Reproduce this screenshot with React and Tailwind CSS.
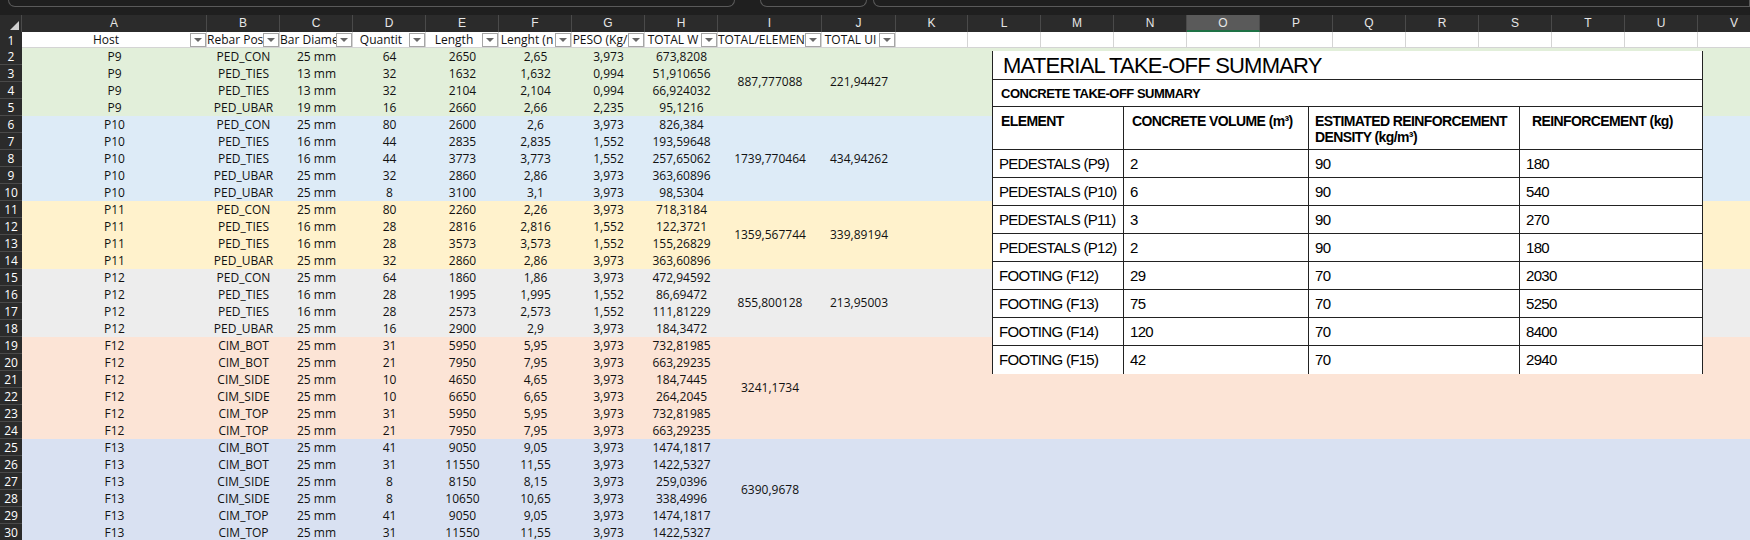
import React from "react";

const COLS = [
  ["A", 185], ["B", 73], ["C", 73], ["D", 73], ["E", 73], ["F", 73], ["G", 73], ["H", 73],
  ["I", 104], ["J", 74], ["K", 72], ["L", 73], ["M", 73], ["N", 73], ["O", 73], ["P", 73],
  ["Q", 73], ["R", 73], ["S", 73], ["T", 73], ["U", 73], ["V", 73],
];

const HEADS = ["Host", "Rebar Posi", "Bar Diame", "Quantit", "Length", "Lenght (n", "PESO (Kg/", "TOTAL W", "TOTAL/ELEMENT", "TOTAL UI"];

const groups = [
  {
    bg: "bg-[#e2efda]", i: "887,777088", j: "221,94427",
    rows: [
      ["P9", "PED_CON", "25 mm", "64", "2650", "2,65", "3,973", "673,8208"],
      ["P9", "PED_TIES", "13 mm", "32", "1632", "1,632", "0,994", "51,910656"],
      ["P9", "PED_TIES", "13 mm", "32", "2104", "2,104", "0,994", "66,924032"],
      ["P9", "PED_UBAR", "19 mm", "16", "2660", "2,66", "2,235", "95,1216"],
    ],
  },
  {
    bg: "bg-[#ddebf7]", i: "1739,770464", j: "434,94262",
    rows: [
      ["P10", "PED_CON", "25 mm", "80", "2600", "2,6", "3,973", "826,384"],
      ["P10", "PED_TIES", "16 mm", "44", "2835", "2,835", "1,552", "193,59648"],
      ["P10", "PED_TIES", "16 mm", "44", "3773", "3,773", "1,552", "257,65062"],
      ["P10", "PED_UBAR", "25 mm", "32", "2860", "2,86", "3,973", "363,60896"],
      ["P10", "PED_UBAR", "25 mm", "8", "3100", "3,1", "3,973", "98,5304"],
    ],
  },
  {
    bg: "bg-[#fff2cc]", i: "1359,567744", j: "339,89194",
    rows: [
      ["P11", "PED_CON", "25 mm", "80", "2260", "2,26", "3,973", "718,3184"],
      ["P11", "PED_TIES", "16 mm", "28", "2816", "2,816", "1,552", "122,3721"],
      ["P11", "PED_TIES", "16 mm", "28", "3573", "3,573", "1,552", "155,26829"],
      ["P11", "PED_UBAR", "25 mm", "32", "2860", "2,86", "3,973", "363,60896"],
    ],
  },
  {
    bg: "bg-[#ededed]", i: "855,800128", j: "213,95003",
    rows: [
      ["P12", "PED_CON", "25 mm", "64", "1860", "1,86", "3,973", "472,94592"],
      ["P12", "PED_TIES", "16 mm", "28", "1995", "1,995", "1,552", "86,69472"],
      ["P12", "PED_TIES", "16 mm", "28", "2573", "2,573", "1,552", "111,81229"],
      ["P12", "PED_UBAR", "25 mm", "16", "2900", "2,9", "3,973", "184,3472"],
    ],
  },
  {
    bg: "bg-[#fce4d6]", i: "3241,1734", j: "",
    rows: [
      ["F12", "CIM_BOT", "25 mm", "31", "5950", "5,95", "3,973", "732,81985"],
      ["F12", "CIM_BOT", "25 mm", "21", "7950", "7,95", "3,973", "663,29235"],
      ["F12", "CIM_SIDE", "25 mm", "10", "4650", "4,65", "3,973", "184,7445"],
      ["F12", "CIM_SIDE", "25 mm", "10", "6650", "6,65", "3,973", "264,2045"],
      ["F12", "CIM_TOP", "25 mm", "31", "5950", "5,95", "3,973", "732,81985"],
      ["F12", "CIM_TOP", "25 mm", "21", "7950", "7,95", "3,973", "663,29235"],
    ],
  },
  {
    bg: "bg-[#d9e1f2]", i: "6390,9678", j: "",
    rows: [
      ["F13", "CIM_BOT", "25 mm", "41", "9050", "9,05", "3,973", "1474,1817"],
      ["F13", "CIM_BOT", "25 mm", "31", "11550", "11,55", "3,973", "1422,5327"],
      ["F13", "CIM_SIDE", "25 mm", "8", "8150", "8,15", "3,973", "259,0396"],
      ["F13", "CIM_SIDE", "25 mm", "8", "10650", "10,65", "3,973", "338,4996"],
      ["F13", "CIM_TOP", "25 mm", "41", "9050", "9,05", "3,973", "1474,1817"],
      ["F13", "CIM_TOP", "25 mm", "31", "11550", "11,55", "3,973", "1422,5327"],
    ],
  },
];

const summary = [
  ["PEDESTALS (P9)", "2", "90", "180"],
  ["PEDESTALS (P10)", "6", "90", "540"],
  ["PEDESTALS (P11)", "3", "90", "270"],
  ["PEDESTALS (P12)", "2", "90", "180"],
  ["FOOTING (F12)", "29", "70", "2030"],
  ["FOOTING (F13)", "75", "70", "5250"],
  ["FOOTING (F14)", "120", "70", "8400"],
  ["FOOTING (F15)", "42", "70", "2940"],
];

const font = { fontFamily: '"Open Sans", "Liberation Sans", Arial, sans-serif' };
const arial = { fontFamily: '"Liberation Sans", Arial, sans-serif' };

function RowNum({ n }) {
  return (
    <div className="w-[22px] h-[17px] shrink-0 bg-[#2b2b2b] border-b border-[#4a4a4a] text-white text-[12px] leading-[17px] text-center">
      {n}
    </div>
  );
}

function Filter() {
  return (
    <div className="absolute right-0 top-[1px] w-[16px] h-[14px] border border-[#a6a6a6] bg-white flex items-center justify-center">
      <div className="w-0 h-0 border-l-[4px] border-r-[4px] border-t-[4px] border-l-transparent border-r-transparent border-t-[#666]" />
    </div>
  );
}

export default function App() {
  let rowNo = 2;
  return (
    <div className="w-[1750px] h-[540px] overflow-hidden bg-white relative text-[#111]" style={font}>
      <div className="h-[15px] bg-[#1f1f1f] flex">
        <div className="ml-[8px] w-[727px] h-[7px] border border-t-0 border-[#5a5a5a] rounded-b-[8px]" />
        <div className="ml-[25px] w-[107px] h-[7px] border border-t-0 border-[#5a5a5a] rounded-b-[8px]" />
        <div className="ml-[6px] flex-1 h-[7px] border border-t-0 border-[#5a5a5a] rounded-bl-[8px]" />
      </div>
      <div className="h-[17px] bg-[#2b2b2b] flex text-[#e6e6e6] text-[12px] leading-[17px]" style={arial}>
        <div className="w-[22px] shrink-0 relative border-r border-[#4a4a4a]">
          <div className="absolute right-[2px] bottom-[2px] w-0 h-0" style={{ borderBottom: "9px solid #d0d0d0", borderLeft: "9px solid transparent" }} />
        </div>
        {COLS.map(([c, w]) => (
          <div
            key={c}
            style={{ width: w }}
            className={`shrink-0 text-center border-r border-[#4a4a4a] ${c === "O" ? "bg-[#5a5a5a] border-b-2 border-b-[#1e7145]" : ""}`}
          >
            {c}
          </div>
        ))}
      </div>
      <div className="flex h-[16px] text-[12px] leading-[16px]">
        <RowNum n={1} />
        {COLS.map(([c, w], k) => (
          <div key={c} style={{ width: w }} className="shrink-0 relative border-r border-b border-[#d4d4d4] overflow-hidden">
            {HEADS[k] && (
              <>
                <div className="text-center pr-[16px] whitespace-nowrap overflow-hidden">{HEADS[k]}</div>
                <Filter />
              </>
            )}
          </div>
        ))}
      </div>
      {groups.map((g, gi) => {
        const start = rowNo;
        rowNo += g.rows.length;
        return (
          <div key={gi} className={`flex ${g.bg} text-[12px]`}>
            <div className="flex flex-col">
              {g.rows.map((r, ri) => (
                <div key={ri} className="flex h-[17px] leading-[17px]">
                  <RowNum n={start + ri} />
                  {r.map((v, k) => (
                    <div key={k} style={{ width: COLS[k][1] }} className="shrink-0 text-center whitespace-nowrap">
                      {v}
                    </div>
                  ))}
                </div>
              ))}
            </div>
            <div className="w-[104px] shrink-0 flex items-center justify-center">{g.i}</div>
            <div className="w-[74px] shrink-0 flex items-center justify-center">{g.j}</div>
            <div className="flex-1" />
          </div>
        );
      })}
      <div className="absolute left-[992px] top-[51px] w-[711px] bg-white border-x border-[#222] text-black" style={arial}>
        <div className="h-[29px] border-b border-[#222] px-[10px] text-[22px] leading-[29px] tracking-[-0.8px]">MATERIAL TAKE-OFF SUMMARY</div>
        <div className="h-[27px] border-b border-[#222] px-[8px] text-[13px] font-bold leading-[27px] tracking-[-0.5px]">CONCRETE TAKE-OFF SUMMARY</div>
        <div className="flex h-[43px] border-b border-[#222] text-[14px] font-bold leading-[16px] tracking-[-0.6px]">
          <div className="w-[131px] px-[8px] pt-[6px] border-r border-[#222]">ELEMENT</div>
          <div className="w-[185px] px-[8px] pt-[6px] border-r border-[#222]">CONCRETE VOLUME (m³)</div>
          <div className="w-[211px] px-[6px] pt-[6px] border-r border-[#222]">ESTIMATED REINFORCEMENT DENSITY (kg/m³)</div>
          <div className="flex-1 px-[12px] pt-[6px]">REINFORCEMENT (kg)</div>
        </div>
        {summary.map((r, i) => (
          <div key={i} className={`flex h-[28px] text-[15px] leading-[28px] tracking-[-0.7px] ${i < summary.length - 1 ? "border-b border-[#222]" : ""}`}>
            <div className="w-[131px] px-[6px] border-r border-[#222] whitespace-nowrap">{r[0]}</div>
            <div className="w-[185px] px-[6px] border-r border-[#222]">{r[1]}</div>
            <div className="w-[211px] px-[6px] border-r border-[#222]">{r[2]}</div>
            <div className="flex-1 px-[6px]">{r[3]}</div>
          </div>
        ))}
      </div>
    </div>
  );
}
